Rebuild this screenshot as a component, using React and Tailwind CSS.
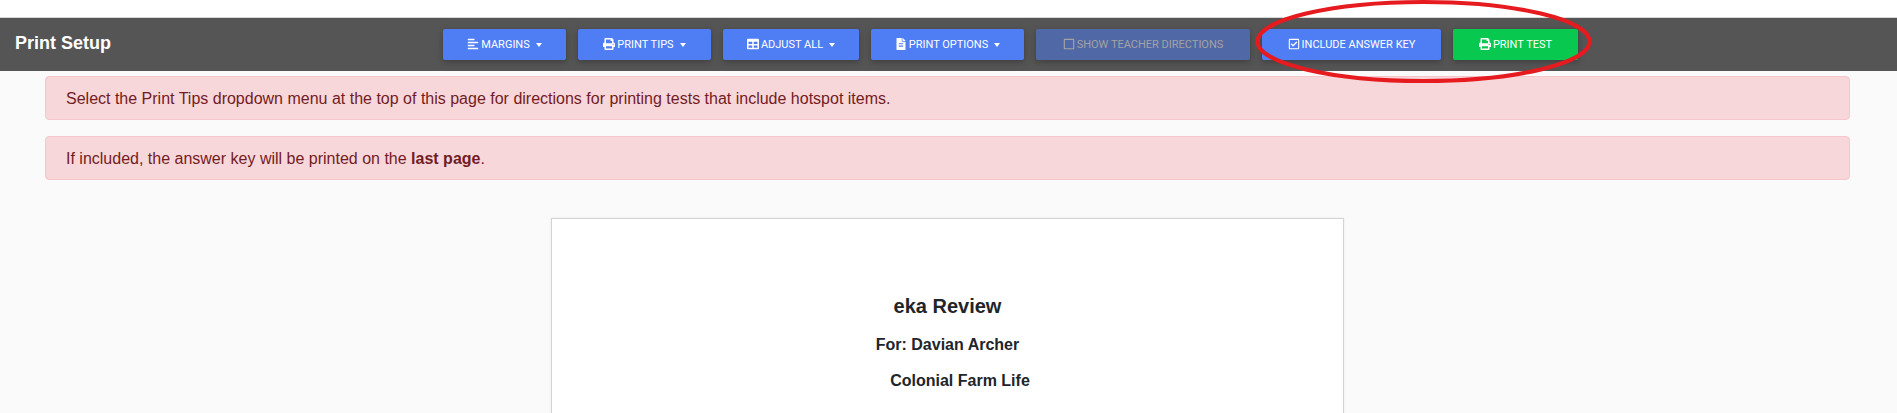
import React from "react";
import { FaAlignLeft, FaPrint, FaTable, FaFileAlt, FaRegSquare, FaRegCheckSquare } from "react-icons/fa";

const blue = "bg-[#4e7df4] text-white";

function Btn({ icon: Icon, label, caret, className, colour = blue }) {
  return (
    <div
      className={`flex h-[31px] items-center justify-center rounded-[2px] text-[11px] uppercase shadow-[0_2px_5px_0_rgba(0,0,0,0.16),0_2px_10px_0_rgba(0,0,0,0.12)] ${colour} ${className}`}
    >
      <Icon className="mb-[1px] mr-[2px] h-[12px] w-[12px]" />
      <span className="pt-[1px]">{label}</span>
      {caret && (
        <span className="ml-[6px] h-0 w-0 border-x-[3.5px] border-t-[4px] border-x-transparent border-t-current" />
      )}
    </div>
  );
}

function Alert({ children }) {
  return (
    <div className="rounded-[4px] border border-[#f5c6cb] bg-[#f8d7da] px-5 pb-[8px] pt-[10px] text-[16px] leading-6 text-[#721c24]">
      {children}
    </div>
  );
}

export default function App() {
  return (
    <div className="relative h-screen overflow-hidden bg-[#fafafa] font-['Liberation_Sans',Arial,sans-serif]">
      <div className="h-[17px] bg-white" />
      <header className="flex h-[54px] items-start border-t border-[#d8d8d8] bg-[#555555]">
        <div className="w-[443px] pl-[15px] pt-[10px] text-[18px] font-bold leading-[30px] text-white">Print Setup</div>
        <div className="flex gap-3 pt-[11px] font-['Roboto',sans-serif]">
          <Btn icon={FaAlignLeft} label="Margins" caret className="w-[123px]" />
          <Btn icon={FaPrint} label="Print Tips" caret className="w-[133px]" />
          <Btn icon={FaTable} label="Adjust All" caret className="w-[136px]" />
          <Btn icon={FaFileAlt} label="Print Options" caret className="w-[153px]" />
          <Btn icon={FaRegSquare} label="Show Teacher Directions" className="w-[214px]" colour="bg-[#5068a5] text-[#a3a3a3]" />
          <Btn icon={FaRegCheckSquare} label="Include Answer Key" className="w-[179px]" />
          <Btn icon={FaPrint} label="Print Test" className="w-[125px]" colour="bg-[#08c84f] text-white" />
        </div>
      </header>

      <main className="px-[45px] pt-[5px] pr-[47px]">
        <div className="flex flex-col gap-[16px]">
          <Alert>Select the Print Tips dropdown menu at the top of this page for directions for printing tests that include hotspot items.</Alert>
          <Alert>
            If included, the answer key will be printed on the <b>last page</b>.
          </Alert>
        </div>
      </main>

      <section className="mx-auto mt-[38px] h-[400px] w-[793px] -translate-x-[1px] border border-[#d4d4d4] bg-white pt-[73px] text-center font-bold text-[#212529] shadow-[0_0_2px_rgba(0,0,0,0.08)]">
        <div className="text-[20px] leading-[28px]">eka Review</div>
        <div className="mt-[13px] text-[16px] leading-[24px]">For: Davian Archer</div>
        <div className="mt-[12px] pl-[25px] text-[16px] leading-[24px]">Colonial Farm Life</div>
      </section>

      <svg className="pointer-events-none absolute left-[1250px] top-0" width="348" height="86" viewBox="0 0 348 86">
        <ellipse cx="173.5" cy="41.5" rx="166" ry="39.5" fill="none" stroke="#e51b1f" strokeWidth="4" />
      </svg>
    </div>
  );
}
